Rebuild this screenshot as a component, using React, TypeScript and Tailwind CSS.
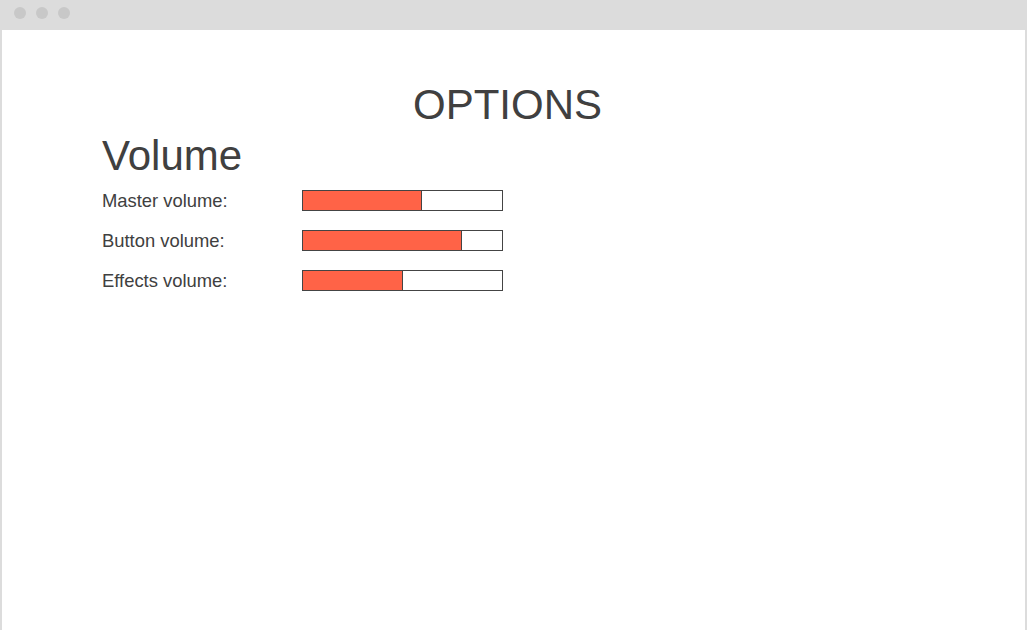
const volumes = [
  { label: 'Master volume:', value: 60 },
  { label: 'Button volume:', value: 80 },
  { label: 'Effects volume:', value: 50 },
];

export default function App() {
  return (
    <div className="w-[1027px] h-[630px] flex flex-col bg-[#dcdcdc] font-['Liberation_Sans',Arial,sans-serif] text-[#404040]">
      <div className="h-[30px] shrink-0 flex items-center gap-[10px] pl-[14px] pb-[4px]">
        <span className="w-[12px] h-[12px] rounded-full bg-[#c8c8c8]" />
        <span className="w-[12px] h-[12px] rounded-full bg-[#c8c8c8]" />
        <span className="w-[12px] h-[12px] rounded-full bg-[#c8c8c8]" />
      </div>
      <div className="flex-1 mx-[2px] bg-white pl-[100px] pr-[112px] pt-[51px]">
        <h1 className="text-[42px] leading-[1.15] text-center">OPTIONS</h1>
        <h2 className="text-[42px] leading-[1.15] mt-[3px]">Volume</h2>
        <div className="flex flex-col">
          {volumes.map((v) => (
            <div key={v.label} className="flex items-center h-[40px]">
              <span className="w-[200px] text-[18.4px]">{v.label}</span>
              <div className="w-[201px] h-[21px] border border-[#444] bg-white flex">
                <div
                  className="h-full bg-[#ff6347] border-r border-[#444]"
                  style={{ width: `${v.value}%` }}
                />
              </div>
            </div>
          ))}
        </div>
      </div>
    </div>
  );
}
